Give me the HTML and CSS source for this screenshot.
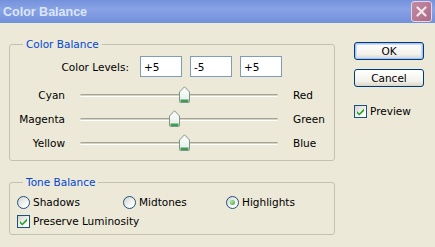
FILE: index.html
```html
<!DOCTYPE html>
<html lang="en">
<head>
    <meta charset="UTF-8">
    <title>Color Balance</title>
    <link rel="stylesheet" href="styles.css">
</head>
<body>
    <div class="dialog">
        <div class="titlebar">
            <span class="title">Color Balance</span>
            <span class="close">
                <svg width="11" height="11" viewBox="0 0 11 11">
                    <path d="M1.5 1.5 L9.5 9.5 M9.5 1.5 L1.5 9.5" stroke="#f4e8ef" stroke-width="2.2" stroke-linecap="round"/>
                </svg>
            </span>
        </div>

        <div class="content">
            <div class="main">
                <fieldset class="group balance">
                    <legend>Color Balance</legend>
                    <div class="levels">
                        <span class="levels-label">Color Levels:</span>
                        <input class="level" type="text" value="+5">
                        <input class="level" type="text" value="-5">
                        <input class="level" type="text" value="+5">
                    </div>
                    <div class="sliders">
                        <span class="left">Cyan</span>
                        <div class="slider">
                            <div class="track"></div>
                            <span class="thumb" style="--v: 5"><svg width="11" height="17" viewBox="0 0 11 17"><use href="#thumb"/></svg></span>
                        </div>
                        <span class="right">Red</span>

                        <span class="left">Magenta</span>
                        <div class="slider">
                            <div class="track"></div>
                            <span class="thumb" style="--v: -5"><svg width="11" height="17" viewBox="0 0 11 17"><use href="#thumb"/></svg></span>
                        </div>
                        <span class="right">Green</span>

                        <span class="left">Yellow</span>
                        <div class="slider">
                            <div class="track"></div>
                            <span class="thumb" style="--v: 5"><svg width="11" height="17" viewBox="0 0 11 17"><use href="#thumb"/></svg></span>
                        </div>
                        <span class="right">Blue</span>
                    </div>
                </fieldset>

                <fieldset class="group tone">
                    <legend>Tone Balance</legend>
                    <div class="modes">
                        <label class="option"><span class="radio"></span>Shadows</label>
                        <label class="option"><span class="radio"></span>Midtones</label>
                        <label class="option"><span class="radio checked"></span>Highlights</label>
                    </div>
                    <label class="option luminosity">
                        <span class="check"><svg width="11" height="11" viewBox="0 0 11 11"><use href="#tick"/></svg></span>Preserve Luminosity
                    </label>
                </fieldset>
            </div>

            <div class="side">
                <button class="btn default">OK</button>
                <button class="btn">Cancel</button>
                <label class="option preview">
                    <span class="check"><svg width="11" height="11" viewBox="0 0 11 11"><use href="#tick"/></svg></span>Preview
                </label>
            </div>
        </div>
    </div>

    <svg width="0" height="0" class="defs">
        <defs>
            <linearGradient id="thumb-fill" x1="0" y1="0" x2="0" y2="1">
                <stop offset="0" stop-color="#ffffff"/>
                <stop offset="1" stop-color="#e3eee4"/>
            </linearGradient>
            <symbol id="thumb" viewBox="0 0 11 17">
                <path d="M0.5 6 L5.5 0.8 L10.5 6 L10.5 15.5 Q10.5 16.5 9.5 16.5 L1.5 16.5 Q0.5 16.5 0.5 15.5 Z" fill="url(#thumb-fill)" stroke="#7f9589"/>
                <path d="M1.5 14.2 H9.5 M1.5 15.4 H9.5" stroke="#3f9b56" stroke-width="1.2"/>
            </symbol>
            <symbol id="tick" viewBox="0 0 11 11">
                <path d="M2 5 L4.3 7.4 L9 2.6 L9 4.9 L4.3 9.6 L2 7.3 Z" fill="#21a121"/>
            </symbol>
        </defs>
    </svg>
</body>
</html>
```

FILE: styles.css
```css
body {
    margin: 0;
    font-family: "DejaVu Sans", Verdana, sans-serif;
    font-size: 10.5px;
    color: #000;
    overflow: hidden;
}
.defs {
    position: absolute;
}
.dialog {
    width: 435px;
    height: 247px;
    background-color: #ece9d8;
}
.titlebar {
    height: 23px;
    display: flex;
    align-items: center;
    justify-content: space-between;
    padding: 0 3px 0 3px;
    background: linear-gradient(#7491dc, #88a3e5 40%, #7d98e0 70%, #7390db);
}
.title {
    font-family: "Liberation Sans", Arial, sans-serif;
    font-weight: bold;
    font-size: 12.5px;
    color: #dce6f8;
}
.close {
    width: 19px;
    height: 19px;
    display: flex;
    align-items: center;
    justify-content: center;
    border: 1px solid #e6d4e0;
    border-radius: 3px;
    background: linear-gradient(135deg, #c48aa2, #aa6c88);
}
.content {
    display: flex;
    padding: 15px 0 0 9px;
}
.main {
    width: 326px;
}
.group {
    margin: 0;
    padding: 0 0 5px 0;
    min-width: 0;
    border: 1px solid #c3c1b1;
    border-radius: 3px;
}
.group legend {
    margin-left: 13px;
    padding: 0 3px;
    line-height: 13px;
    color: #0046d5;
}
.tone {
    margin-top: 15px;
}
.levels {
    display: flex;
    align-items: center;
    gap: 8px;
    margin-top: 5px;
}
.levels-label {
    width: 119px;
    margin-right: 3px;
    text-align: right;
}
.level {
    width: 42px;
    height: 21px;
    box-sizing: border-box;
    margin: 0;
    padding: 0 3px;
    border: 1px solid #7f9db9;
    background-color: white;
    font: inherit;
    color: #000;
}
.sliders {
    display: grid;
    grid-template-columns: 55px 212px auto;
    grid-auto-rows: 24px;
    column-gap: 8px;
    align-items: center;
    margin-top: 6px;
}
.sliders .left {
    text-align: right;
}
.slider {
    position: relative;
    height: 24px;
    display: flex;
    align-items: center;
}
.track {
    margin: 0 7px;
    flex: 1;
    height: 1px;
    border-top: 1px solid #a4a398;
    border-bottom: 1px solid #ffffff;
    background-color: #d6d3c4;
    border-radius: 2px;
}
.thumb {
    position: absolute;
    top: 3px;
    left: calc(7px + (100% - 14px) * (var(--v) + 100) / 200 - 5px);
    width: 11px;
    height: 17px;
}
.thumb svg {
    display: block;
}
.modes {
    display: grid;
    grid-template-columns: 106px 103px auto;
    margin-top: 5px;
    padding-left: 7px;
}
.option {
    display: flex;
    align-items: center;
    gap: 3px;
    height: 16px;
}
.luminosity {
    margin-top: 3px;
    padding-left: 7px;
}
.radio {
    width: 13px;
    height: 13px;
    box-sizing: border-box;
    border: 1px solid #1c5180;
    border-radius: 50%;
    background: linear-gradient(135deg, #d4d4cc, #ffffff 80%);
    display: flex;
    align-items: center;
    justify-content: center;
}
.radio.checked::after {
    content: "";
    width: 5px;
    height: 5px;
    border-radius: 50%;
    background: radial-gradient(circle at 35% 35%, #a8e8a0, #3da43d);
}
.check {
    width: 13px;
    height: 13px;
    box-sizing: border-box;
    border: 1px solid #1c5180;
    background: linear-gradient(135deg, #d4d4cc, #ffffff 80%);
    display: flex;
    align-items: center;
    justify-content: center;
}
.check svg {
    display: block;
}
.side {
    display: flex;
    flex-direction: column;
    align-items: flex-start;
    margin-left: 19px;
    padding-top: 4px;
}
.btn {
    width: 70px;
    height: 18px;
    margin: 0;
    padding: 0;
    border: 1px solid #003c74;
    border-radius: 3px;
    background: linear-gradient(#ffffff, #f2f1ea 70%, #d9d5c8);
    font: inherit;
    color: #000;
}
.btn.default {
    box-shadow: inset 0 0 0 1px #a9c4f2, inset 0 0 0 2px #cedcf9;
}
.btn + .btn {
    margin-top: 9px;
}
.preview {
    margin-top: 16px;
}
```
